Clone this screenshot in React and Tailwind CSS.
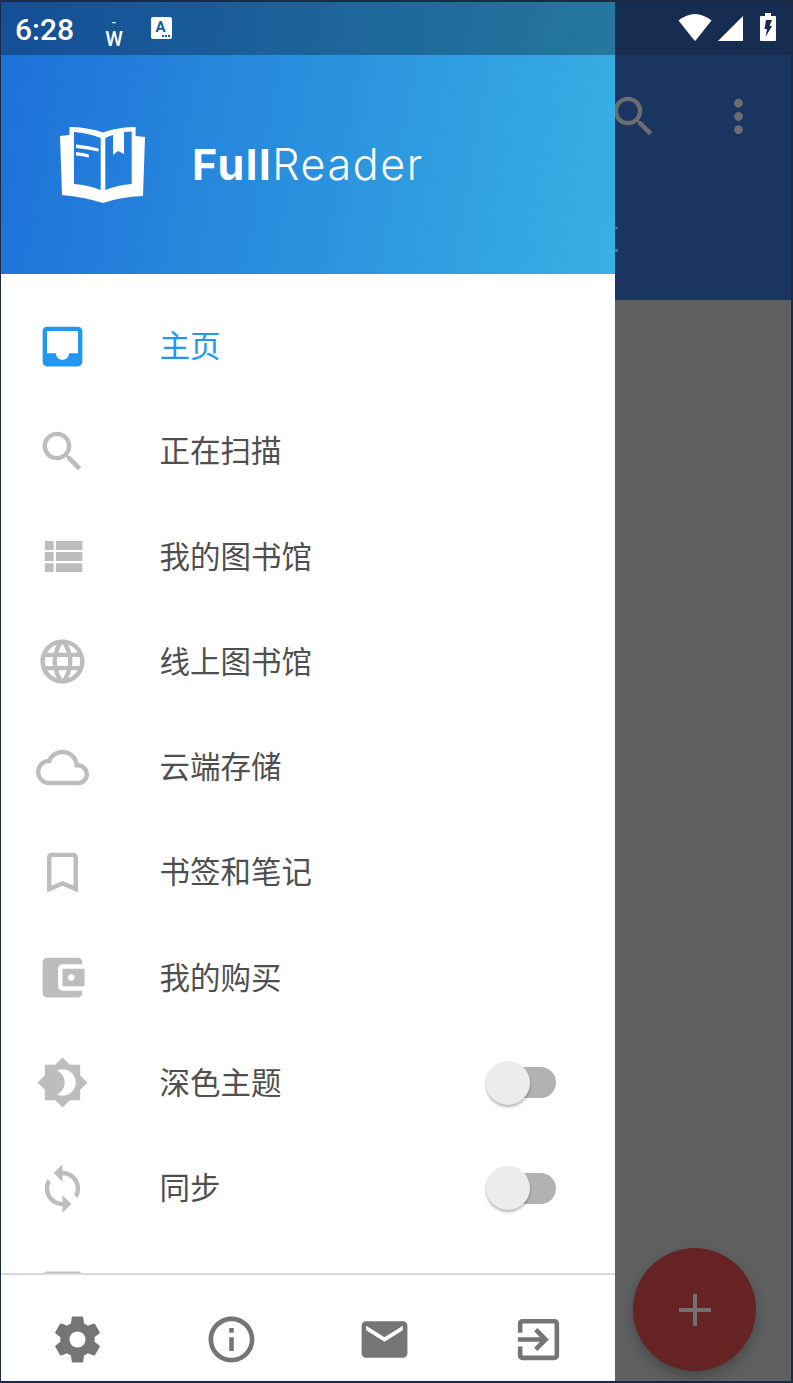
const I = {
  inbox: "M19 3H4.99c-1.11 0-1.98.89-1.98 2L3 19c0 1.1.88 2 1.99 2H19c1.1 0 2-.9 2-2V5c0-1.11-.9-2-2-2zm0 12h-4c0 1.66-1.35 3-3 3s-3-1.34-3-3H4.99V5H19v10z",
  search: "M15.5 14h-.79l-.28-.27C15.41 12.59 16 11.11 16 9.5 16 5.91 13.09 3 9.5 3S3 5.91 3 9.5 5.91 16 9.5 16c1.61 0 3.09-.59 4.23-1.57l.27.28v.79l5 4.99L20.49 19l-4.99-5zm-6 0C7.01 14 5 11.99 5 9.5S7.01 5 9.5 5 14 7.01 14 9.5 11.99 14 9.5 14z",
  list: "M4 14h4v-4H4v4zm0 5h4v-4H4v4zM4 9h4V5H4v4zm5 5h12v-4H9v4zm0 5h12v-4H9v4zM9 5v4h12V5H9z",
  globe: "M11.99 2C6.47 2 2 6.48 2 12s4.47 10 9.99 10C17.52 22 22 17.52 22 12S17.52 2 11.99 2zm6.93 6h-2.95c-.32-1.25-.78-2.45-1.38-3.56 1.84.63 3.37 1.91 4.33 3.56zM12 4.04c.83 1.2 1.48 2.53 1.91 3.96h-3.82c.43-1.43 1.08-2.76 1.91-3.96zM4.26 14C4.1 13.36 4 12.69 4 12s.1-1.36.26-2h3.38c-.08.66-.14 1.32-.14 2 0 .68.06 1.34.14 2H4.26zm.82 2h2.95c.32 1.25.78 2.45 1.38 3.56-1.84-.63-3.37-1.9-4.33-3.56zm2.95-8H5.08c.96-1.66 2.49-2.93 4.33-3.56C8.81 5.55 8.35 6.75 8.03 8zM12 19.96c-.83-1.2-1.48-2.53-1.91-3.96h3.82c-.43 1.43-1.08 2.76-1.91 3.96zM14.34 14H9.66c-.09-.66-.16-1.32-.16-2 0-.68.07-1.35.16-2h4.68c.09.65.16 1.32.16 2 0 .68-.07 1.34-.16 2zm.25 5.56c.6-1.11 1.06-2.31 1.38-3.56h2.95c-.96 1.65-2.49 2.93-4.33 3.56zM16.36 14c.08-.66.14-1.32.14-2 0-.68-.06-1.34-.14-2h3.38c.16.64.26 1.31.26 2s-.1 1.36-.26 2h-3.38z",
  cloud: "M19.35 10.04C18.67 6.59 15.64 4 12 4 9.11 4 6.6 5.64 5.35 8.04 2.34 8.36 0 10.91 0 14c0 3.31 2.69 6 6 6h13c2.76 0 5-2.24 5-5 0-2.64-2.05-4.78-4.65-4.96zM19 18H6c-2.21 0-4-1.79-4-4s1.79-4 4-4h.71C7.37 7.69 9.48 6 12 6c3.04 0 5.5 2.46 5.5 5.5v.5H19c1.66 0 3 1.34 3 3s-1.34 3-3 3z",
  bookmark: "M17 3H7c-1.1 0-1.99.9-1.99 2L5 21l7-3 7 3V5c0-1.1-.9-2-2-2zm0 15l-5-2.18L7 18V5h10v13z",
  wallet: "M21 18v1c0 1.1-.9 2-2 2H5c-1.11 0-2-.9-2-2V5c0-1.1.89-2 2-2h14c1.1 0 2 .9 2 2v1h-9c-1.11 0-2 .9-2 2v8c0 1.1.89 2 2 2h9zm-9-2h10V8H12v8zm4-2.5c-.83 0-1.5-.67-1.5-1.5s.67-1.5 1.5-1.5 1.5.67 1.5 1.5-.67 1.5-1.5 1.5z",
  bright: "M20 8.69V4h-4.69L12 .69 8.69 4H4v4.69L.69 12 4 15.31V20h4.69L12 23.31 15.31 20H20v-4.69L23.31 12 20 8.69zM12 18c-.89 0-1.74-.2-2.5-.55C11.56 16.5 13 14.42 13 12s-1.44-4.5-3.5-5.45C10.26 6.2 11.11 6 12 6c3.31 0 6 2.69 6 6s-2.69 6-6 6z",
  sync: "M12 4V1L8 5l4 4V6c3.31 0 6 2.69 6 6 0 1.01-.25 1.97-.7 2.8l1.46 1.46C19.54 15.03 20 13.57 20 12c0-4.42-3.58-8-8-8zm0 14c-3.31 0-6-2.69-6-6 0-1.01.25-1.97.7-2.8L5.24 7.74C4.46 8.97 4 10.43 4 12c0 4.42 3.58 8 8 8v3l4-4-4-4v3z",
  peek: "M5 2h14c1.1 0 2 .9 2 2v16H3V4c0-1.1.9-2 2-2z",
  more: "M12 8c1.1 0 2-.9 2-2s-.9-2-2-2-2 .9-2 2 .9 2 2 2zm0 2c-1.1 0-2 .9-2 2s.9 2 2 2 2-.9 2-2-.9-2-2-2zm0 6c-1.1 0-2 .9-2 2s.9 2 2 2 2-.9 2-2-.9-2-2-2z",
  gear: "M19.43 12.98c.04-.32.07-.64.07-.98s-.03-.66-.07-.98l2.11-1.65c.19-.15.24-.42.12-.64l-2-3.46c-.12-.22-.39-.3-.61-.22l-2.49 1c-.52-.4-1.08-.73-1.69-.98l-.38-2.65C14.46 2.18 14.25 2 14 2h-4c-.25 0-.46.18-.49.42l-.38 2.65c-.61.25-1.17.59-1.69.98l-2.49-1c-.23-.09-.49 0-.61.22l-2 3.46c-.13.22-.07.49.12.64l2.11 1.65c-.04.32-.07.65-.07.98s.03.66.07.98l-2.11 1.65c-.19.15-.24.42-.12.64l2 3.46c.12.22.39.3.61.22l2.49-1c.52.4 1.08.73 1.69.98l.38 2.65c.03.24.24.42.49.42h4c.25 0 .46-.18.49-.42l.38-2.65c.61-.25 1.17-.59 1.69-.98l2.49 1c.23.09.49 0 .61-.22l2-3.46c.12-.22.07-.49-.12-.64l-2.11-1.65zM12 15.5c-1.93 0-3.5-1.57-3.5-3.5s1.57-3.5 3.5-3.5 3.5 1.57 3.5 3.5-1.57 3.5-3.5 3.5z",
  info: "M11 7h2v2h-2zm0 4h2v6h-2zm1-9C6.48 2 2 6.48 2 12s4.48 10 10 10 10-4.48 10-10S17.52 2 12 2zm0 18c-4.41 0-8-3.59-8-8s3.59-8 8-8 8 3.59 8 8-3.59 8-8 8z",
  mail: "M20 4H4c-1.1 0-1.99.9-1.99 2L2 18c0 1.1.9 2 2 2h16c1.1 0 2-.9 2-2V6c0-1.1-.9-2-2-2zm0 4l-8 5-8-5V6l8 5 8-5v2z",
  exit: "M10.09 15.59L11.5 17l5-5-5-5-1.41 1.41L12.67 11H3v2h9.67l-2.58 2.59zM19 3H5c-1.11 0-2 .9-2 2v4h2V5h14v14H5v-4H3v4c0 1.1.89 2 2 2h14c1.1 0 2-.9 2-2V5c0-1.1-.9-2-2-2z",
};

function Icon({ d, className }) {
  return (
    <svg viewBox="0 0 24 24" className={className} fill="currentColor">
      <path d={d} />
    </svg>
  );
}

function Toggle() {
  return (
    <div className="relative mr-[59px] flex h-[44px] w-[70.5px] items-center justify-end">
      <div className="h-[31px] w-[61px] rounded-full bg-[#b2b2b2]" />
      <div className="absolute left-0 top-0 h-[44px] w-[44px] rounded-full bg-[#ececec] shadow-[0_2px_3px_rgba(0,0,0,0.3)]" />
    </div>
  );
}

function Row({ icon, label, active, toggle }) {
  return (
    <div className="flex h-[105.25px] shrink-0 items-center">
      <div className={`flex w-[158.5px] shrink-0 pl-[34.5px] ${active ? "text-[#2196f3]" : "text-[#bdbdbd]"}`}>
        <Icon d={icon} className="h-[53px] w-[53px]" />
      </div>
      {label && (
        <span className={`flex-1 pt-[2px] text-[30.5px] leading-[40px] ${active ? "text-[#2196f3]" : "text-[#4f4f4f]"}`}>{label}</span>
      )}
      {toggle && <Toggle />}
    </div>
  );
}

const rows = [
  { icon: I.inbox, label: "主页", active: true },
  { icon: I.search, label: "正在扫描" },
  { icon: I.list, label: "我的图书馆" },
  { icon: I.globe, label: "线上图书馆" },
  { icon: I.cloud, label: "云端存储" },
  { icon: I.bookmark, label: "书签和笔记" },
  { icon: I.wallet, label: "我的购买" },
  { icon: I.bright, label: "深色主题", toggle: true },
  { icon: I.sync, label: "同步", toggle: true },
  { icon: I.peek },
];

function Logo() {
  return (
    <svg viewBox="60 126 85 76" className="h-[76px] w-[85px] shrink-0">
      <path
        fill="#ffffff"
        fillRule="evenodd"
        d="M69.5 126Q87 126 103 131.5Q118 126 135.6 126L135.6 135L145 136L143 195Q120 196 103 202Q84 196 62 194L60 135L69.5 134ZM74 131L74 183Q88 184 100.7 189L100.7 137Q88 132 74 131ZM105.3 137L105.3 189Q118 184 131.7 183L131.7 130.5Q128 130.6 124 131L124 153L118 150L113 154L113 134Q109 135 105.3 137Z"
      />
      <path fill="#ffffff" d="M76 143.6Q88 144.6 98.5 147.4L98.5 150.5Q88 148 76 147ZM76 151Q83 151.6 88.8 153.4L88.8 156.6Q83 155 76 154.5Z" />
    </svg>
  );
}

export default function App() {
  return (
    <div className="relative h-[1383px] w-[793px] overflow-hidden bg-[#1b2a45] pb-[2px] pl-px pr-[2px] pt-[2px] font-['Roboto','Noto_Sans_CJK_SC',sans-serif]">
      <div className="flex h-full flex-col">
        <div className="h-[53px] bg-[#1a3560]" />
        <div className="flex h-[245px] justify-end gap-[52px] bg-[#1a3560] pr-[26.5px] pt-[34.5px] text-[#6c6d70]">
          <Icon d={I.search} className="h-[53px] w-[53px]" />
          <Icon d={I.more} className="h-[53px] w-[53px]" />
        </div>
        <div className="flex-1 bg-[#5f6062]" />
      </div>

      <div className="absolute left-[612px] top-[227px] h-[2px] w-[6px] bg-[#5f6a7c]" />
      <div className="absolute left-[612px] top-[249px] h-[3px] w-[6px] bg-[#5f6a7c]" />

      <div className="absolute bottom-[12px] left-[633px] flex h-[123px] w-[123px] items-center justify-center rounded-full bg-[#662323] shadow-[0_6px_14px_rgba(0,0,0,0.25)]">
        <svg viewBox="0 0 32 32" className="h-[32px] w-[32px]">
          <path fill="#717171" d="M14 0h4v14h14v4H18v14h-4V18H0v-4h14z" />
        </svg>
      </div>

      <div className="absolute bottom-[2px] left-px top-[2px] flex w-[614px] flex-col bg-white font-['Roboto','Noto_Sans_CJK_SC',sans-serif]">
        <div className="flex h-[272px] shrink-0 items-center gap-[47px] bg-[linear-gradient(100deg,#1d70d8,#37b0e3)] pl-[59px] pt-[53px]">
          <Logo />
          <div className="whitespace-nowrap font-['Inter',sans-serif] text-[43px] leading-none tracking-[1.6px] text-white">
            <span className="font-bold">Full</span>
            <span className="font-light">Reader</span>
          </div>
        </div>
        <div className="min-h-0 flex-1 overflow-hidden pt-[19.4px]">
          {rows.map((r, i) => (
            <Row key={i} {...r} />
          ))}
        </div>
        <div className="grid h-[108px] shrink-0 grid-cols-4 justify-items-center border-t-2 border-[#d9d9d9] pt-[37px] text-[#757575]">
          <Icon d={I.gear} className="h-[55px] w-[55px]" />
          <Icon d={I.info} className="h-[55px] w-[55px]" />
          <Icon d={I.mail} className="h-[55px] w-[55px]" />
          <Icon d={I.exit} className="h-[55px] w-[55px]" />
        </div>
      </div>

      <div className="absolute left-px right-[2px] top-[2px] flex h-[53px]">
        <div className="flex w-[614px] shrink-0 bg-black/30 pl-[14px] text-white">
          <span className="mt-[10px] text-[30px] font-medium leading-[36px]">6:28</span>
          <div className="ml-[31px] mt-[17px] flex w-[18px] flex-col items-center text-[20px] font-medium leading-[14px]">
            <span className="h-[13px] text-[13px] leading-[8px]">-</span>
            <span>W</span>
          </div>
          <svg viewBox="0 0 21 22" className="ml-[28px] mt-[15px] h-[22px] w-[21px]">
            <rect width="21" height="22" rx="2" fill="#ffffff" />
            <text x="9.5" y="14.5" textAnchor="middle" fontSize="15" fontWeight="700" fontFamily="Roboto" fill="#1a5a9c">A</text>
            <path fill="#1a5a9c" d="M11 18h2v2h-2zM14 18h2v2h-2zM17 18h2v2h-2z" />
          </svg>
        </div>
        <div className="flex flex-1 items-start justify-end bg-black/15 pr-[15px] pt-[11px]">
          <svg viewBox="0 0 34 27" className="mt-px h-[27px] w-[34px]">
            <path fill="#ffffff" d="M0.5 6.5Q17-6.5 33.5 6.5L18 26Q17 27.4 16 26Z" />
          </svg>
          <svg viewBox="0 0 25 25" className="ml-[6px] mt-[3px] h-[25px] w-[25px]">
            <path fill="#ffffff" d="M0 25L25 0V25Z" />
          </svg>
          <svg viewBox="0 0 16 28" className="ml-[17px] h-[28px] w-[16px]">
            <path fill="#ffffff" d="M5 0h6v3h4q1 0 1 1v23q0 1-1 1H1q-1 0-1-1V4q0-1 1-1h4z" />
            <path fill="#17294f" d="M6 7h6l-2.5 6H12L5.5 24l1.5-8H4.5z" />
          </svg>
        </div>
      </div>
    </div>
  );
}
